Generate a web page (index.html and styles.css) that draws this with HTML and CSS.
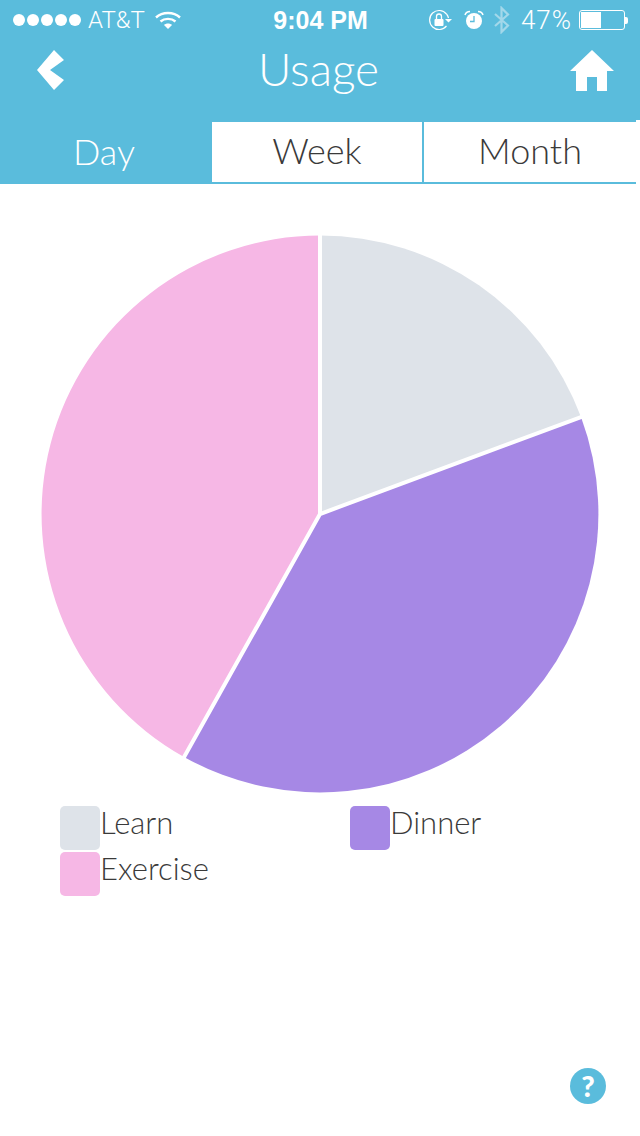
FILE: index.html
```html
<!DOCTYPE html>
<html lang="en">
<head>
  <meta charset="UTF-8">
  <title>Usage</title>
  <meta name="viewport" content="width=device-width, initial-scale=1.0">
  <link rel="stylesheet" href="styles.css">
</head>
<body>
  <div class="top">
    <div class="status">
      <div class="status-left">
        <span class="dots"><i></i><i></i><i></i><i></i><i></i></span>
        <span>AT&amp;T</span>
        <svg class="wifi" width="26" height="20" viewBox="0 0 26 20">
          <path d="M1 7.5 C7.5 1.5 18.5 1.5 25 7.5" fill="none" stroke="#fff" stroke-width="2.4"/>
          <path d="M5.5 11.5 C9.5 8 16.5 8 20.5 11.5" fill="none" stroke="#fff" stroke-width="2.4"/>
          <path d="M9 15 C11 13 15 13 17 15 L13 19 Z" fill="#fff"/>
        </svg>
      </div>
      <div class="status-time">9:04 PM</div>
      <div class="status-right">
        <svg width="24" height="24" viewBox="0 0 24 24">
          <path d="M18.5 6 A9.5 9.5 0 1 0 18.5 18" fill="none" stroke="#fff" stroke-width="1.2"/>
          <path d="M18.5 6 A9.5 9.5 0 0 1 20.5 10" fill="none" stroke="#fff" stroke-width="1.2"/>
          <path d="M17 11 H24 L20.5 14.5 Z" fill="#fff"/>
          <rect x="6.5" y="11" width="9" height="7" rx="1" fill="#fff"/>
          <path d="M8.5 11 V8.5 A2.5 2.5 0 0 1 13.5 8.5 V11" fill="none" stroke="#fff" stroke-width="1.3"/>
        </svg>
        <svg class="alarm" width="20" height="20" viewBox="0 0 20 20">
          <circle cx="10" cy="11" r="8" fill="#fff"/>
          <path d="M10 6 V11.5 H6" fill="none" stroke="#5abcdc" stroke-width="1.3"/>
          <path d="M1 5 Q2 1.5 6 1.5 M19 5 Q18 1.5 14 1.5" fill="none" stroke="#fff" stroke-width="1.5"/>
        </svg>
        <svg class="bluetooth" width="18" height="28" viewBox="0 0 18 28">
          <path d="M2 8 L15 19.5 L8.5 26 V2 L15 8.5 L2 20" fill="none" stroke="#a3d8ea" stroke-width="2.2"/>
        </svg>
        <span class="pct">47%</span>
        <span class="battery"><span class="battery-fill"></span></span>
        <span class="battery-tip"></span>
      </div>
    </div>
    <div class="header">
      <svg class="nav-icon" width="30" height="42" viewBox="0 0 30 42">
        <path d="M0 20 L17 0 L27 10 L13 20 L27 30 L17 40 Z" fill="#fff"/>
      </svg>
      <h1>Usage</h1>
      <svg class="nav-icon" width="44" height="42" viewBox="0 0 44 42">
        <path d="M22 0 L44 21 H37 V41 H27 V27 H17 V41 H6 V21 H0 Z" fill="#fff"/>
      </svg>
    </div>
  </div>

  <div class="tabs">
    <div class="tab active">Day</div>
    <div class="tab week">Week</div>
    <div class="tab month">Month</div>
  </div>

  <div class="chart">
    <svg width="560" height="560" viewBox="0 0 560 560">
      <path d="M280 280 L280 1.5 A278.5 278.5 0 0 1 541 183 Z" fill="#dee3e9"/>
      <path d="M280 280 L541 183 A278.5 278.5 0 0 1 144 523 Z" fill="#a688e5"/>
      <path d="M280 280 L144 523 A278.5 278.5 0 0 1 280 1.5 Z" fill="#f6b7e5"/>
      <path d="M280 0 V280 L543 182.3 M280 280 L143 525" fill="none" stroke="#fff" stroke-width="4"/>
    </svg>
  </div>

  <div class="legend">
    <div class="legend-item"><span class="swatch learn"></span>Learn</div>
    <div class="legend-item"><span class="swatch dinner"></span>Dinner</div>
    <div class="legend-item"><span class="swatch exercise"></span>Exercise</div>
  </div>

  <div class="help">
    <div class="help-btn">?</div>
  </div>
</body>
</html>
```

FILE: styles.css
```css
html, body {
  margin: 0;
  padding: 0;
}
body {
  width: 640px;
  height: 1136px;
  overflow: hidden;
  background: #fff;
  color: #3a3a3a;
  font-family: Lato, "Open Sans", sans-serif;
  font-weight: 300;
}
.top {
  height: 122px;
  background: #5abcdc;
  color: #fff;
}
.status {
  height: 40px;
  padding: 0 12px 0 13px;
  display: flex;
  align-items: center;
  justify-content: space-between;
  font-family: Roboto, "Liberation Sans", sans-serif;
  font-size: 24px;
  font-weight: 300;
}
.status-left, .status-right {
  display: flex;
  align-items: center;
  width: 220px;
}
.status-left span + span {
  margin-left: 7px;
}
.status-right {
  justify-content: flex-end;
}
.dots {
  display: flex;
  gap: 2px;
}
.dots i {
  width: 12px;
  height: 12px;
  border-radius: 50%;
  background: #fff;
}
.wifi {
  margin-left: 10px;
}
.status-time {
  font-family: "Liberation Sans", sans-serif;
  font-size: 25px;
  font-weight: bold;
}
.alarm {
  margin-left: 12px;
}
.bluetooth {
  margin-left: 9px;
}
.pct {
  margin-left: 10px;
  font-size: 26px;
  letter-spacing: 1px;
}
.battery {
  margin-left: 7px;
  width: 42px;
  height: 16px;
  padding: 1px;
  border: 1px solid #fff;
  border-radius: 3px;
  display: flex;
}
.battery-fill {
  width: 20px;
  background: #fff;
}
.battery-tip {
  width: 3px;
  height: 7px;
  background: #fff;
  border-radius: 0 2px 2px 0;
}
.header {
  height: 62px;
  padding: 0 26px 0 37px;
  display: flex;
  align-items: center;
  justify-content: space-between;
}
.header h1 {
  margin: 0 0 6px;
  font-size: 46px;
  font-weight: 300;
}
.nav-icon {
  flex: none;
}
.tabs {
  display: flex;
  height: 62px;
  font-size: 36px;
  position: relative;
}
.tabs::after {
  content: "";
  position: absolute;
  right: 0;
  top: -2px;
  width: 4px;
  height: 2px;
  background: #fff;
}
.tab {
  display: flex;
  align-items: center;
  justify-content: center;
  box-sizing: border-box;
  padding-bottom: 4px;
}
.tab.active {
  width: 212px;
  padding-right: 4px;
  background: #5abcdc;
  color: #fff;
}
.tab.week {
  width: 212px;
  border-bottom: 2px solid #5abcdc;
  border-right: 2px solid #5abcdc;
}
.tab.month {
  width: 212px;
  border-bottom: 2px solid #5abcdc;
}
.chart {
  display: flex;
  justify-content: center;
  padding-top: 50px;
}
.chart svg {
  display: block;
}
.legend {
  display: grid;
  grid-template-columns: 290px 1fr;
  row-gap: 2px;
  padding: 12px 0 0 60px;
  font-size: 31px;
}
.legend-item {
  display: flex;
  align-items: flex-start;
  height: 44px;
  line-height: 32px;
}
.swatch {
  width: 40px;
  height: 44px;
  border-radius: 5px;
}
.swatch.learn {
  background: #dee3e9;
}
.swatch.dinner {
  background: #a688e5;
}
.swatch.exercise {
  background: #f6b7e5;
}
.help {
  display: flex;
  justify-content: flex-end;
  padding: 172px 34px 0 0;
}
.help-btn {
  width: 36px;
  height: 36px;
  border-radius: 50%;
  background: #5abcdc;
  color: #fff;
  font-family: Lato, sans-serif;
  font-size: 29px;
  font-weight: 900;
  line-height: 36px;
  text-align: center;
}
```
